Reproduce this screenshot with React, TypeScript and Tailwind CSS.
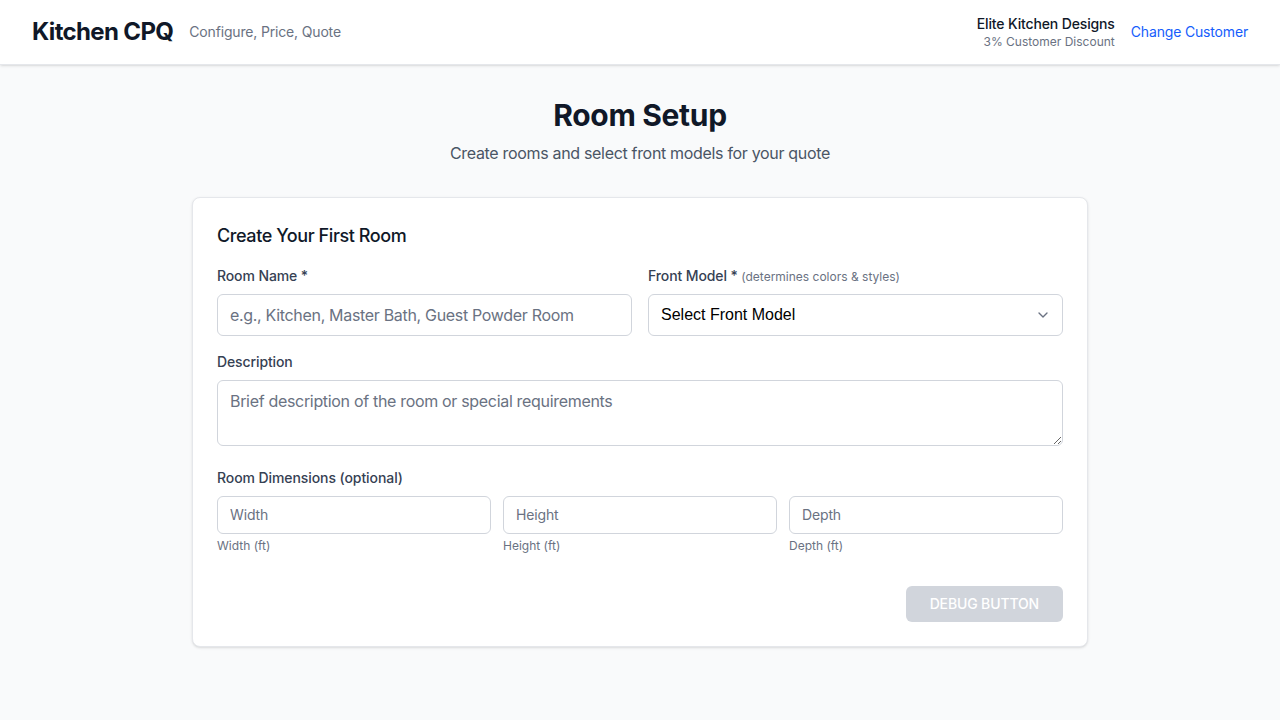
import { ChevronDown } from "lucide-react"

const dimensions = [
  { id: "width", placeholder: "Width", hint: "Width (ft)" },
  { id: "height", placeholder: "Height", hint: "Height (ft)" },
  { id: "depth", placeholder: "Depth", hint: "Depth (ft)" },
]

function Header() {
  return (
    <header className="bg-white border-b border-gray-200 shadow-sm px-8 h-[65px] flex items-center justify-between">
      <div className="flex items-center">
        <h1 className="text-2xl font-bold text-gray-900 tracking-[-0.027em]">Kitchen CPQ</h1>
        <span className="ml-4 text-sm text-gray-500 tracking-[-0.012em]">Configure, Price, Quote</span>
      </div>
      <div className="flex items-center gap-4">
        <div className="text-right">
          <div className="text-sm font-medium text-gray-900 leading-5 tracking-[-0.01em]">Elite Kitchen Designs</div>
          <div className="text-xs text-gray-500 leading-4 tracking-normal">3% Customer Discount</div>
        </div>
        <button className="text-sm text-blue-600 tracking-[-0.012em]">Change Customer</button>
      </div>
    </header>
  )
}

export default function App() {
  return (
    <div className="min-h-screen bg-gray-50 font-['Inter',sans-serif] tracking-[-0.02em]">
      <Header />
      <main className="py-8 px-4">
        <div className="text-center mb-8">
          <h2 className="text-3xl font-bold text-gray-900">Room Setup</h2>
          <p className="mt-2 text-gray-600">Create rooms and select front models for your quote</p>
        </div>

        <div className="max-w-4xl mx-auto bg-white border border-gray-200 rounded-lg shadow-sm p-6">
          <h3 className="text-lg font-medium text-gray-900 mb-4 tracking-[-0.023em]">Create Your First Room</h3>

          <div className="grid grid-cols-2 gap-4 mb-4">
            <div>
              <label className="block text-sm font-medium text-gray-700 mb-2 tracking-[-0.008em]">Room Name *</label>
              <input
                type="text"
                placeholder="e.g., Kitchen, Master Bath, Guest Powder Room"
                className="w-full border border-gray-300 rounded-md px-3 py-2 text-base placeholder-gray-500 outline-none"
              />
            </div>
            <div>
              <label className="block text-sm font-medium text-gray-700 mb-2 tracking-[-0.008em]">
                Front Model *{" "}
                <span className="text-xs font-normal text-gray-500 tracking-normal">(determines colors &amp; styles)</span>
              </label>
              <div className="relative">
                <select className="w-full appearance-none bg-white border border-gray-300 rounded-md px-3 py-2 text-base text-black tracking-normal font-['Liberation_Sans',sans-serif] outline-none">
                  <option>Select Front Model</option>
                </select>
                <ChevronDown className="absolute right-3 top-1/2 -translate-y-1/2 w-4 h-4 text-gray-500 pointer-events-none" />
              </div>
            </div>
          </div>

          <div className="mb-[22px]">
            <label className="block text-sm font-medium text-gray-700 mb-2 tracking-[-0.008em]">Description</label>
            <textarea
              rows={2}
              placeholder="Brief description of the room or special requirements"
              className="w-full block border border-gray-300 rounded-md px-3 py-2 text-base placeholder-gray-500 outline-none"
            />
          </div>

          <div>
            <label className="block text-sm font-medium text-gray-700 mb-2 tracking-[-0.006em]">Room Dimensions (optional)</label>
            <div className="grid grid-cols-3 gap-3">
              {dimensions.map((d) => (
                <div key={d.id}>
                  <input
                    type="text"
                    placeholder={d.placeholder}
                    className="w-full border border-gray-300 rounded-md px-3 py-2 text-sm tracking-[-0.01em] placeholder-gray-500 outline-none"
                  />
                  <p className="mt-1 text-xs text-gray-500 tracking-normal">{d.hint}</p>
                </div>
              ))}
            </div>
          </div>

          <div className="mt-8 flex justify-end">
            <button className="bg-gray-300 text-white text-sm font-medium uppercase rounded-md px-6 py-2 whitespace-nowrap tracking-[-0.01em]">
              Debug Button
            </button>
          </div>
        </div>
      </main>
    </div>
  )
}
